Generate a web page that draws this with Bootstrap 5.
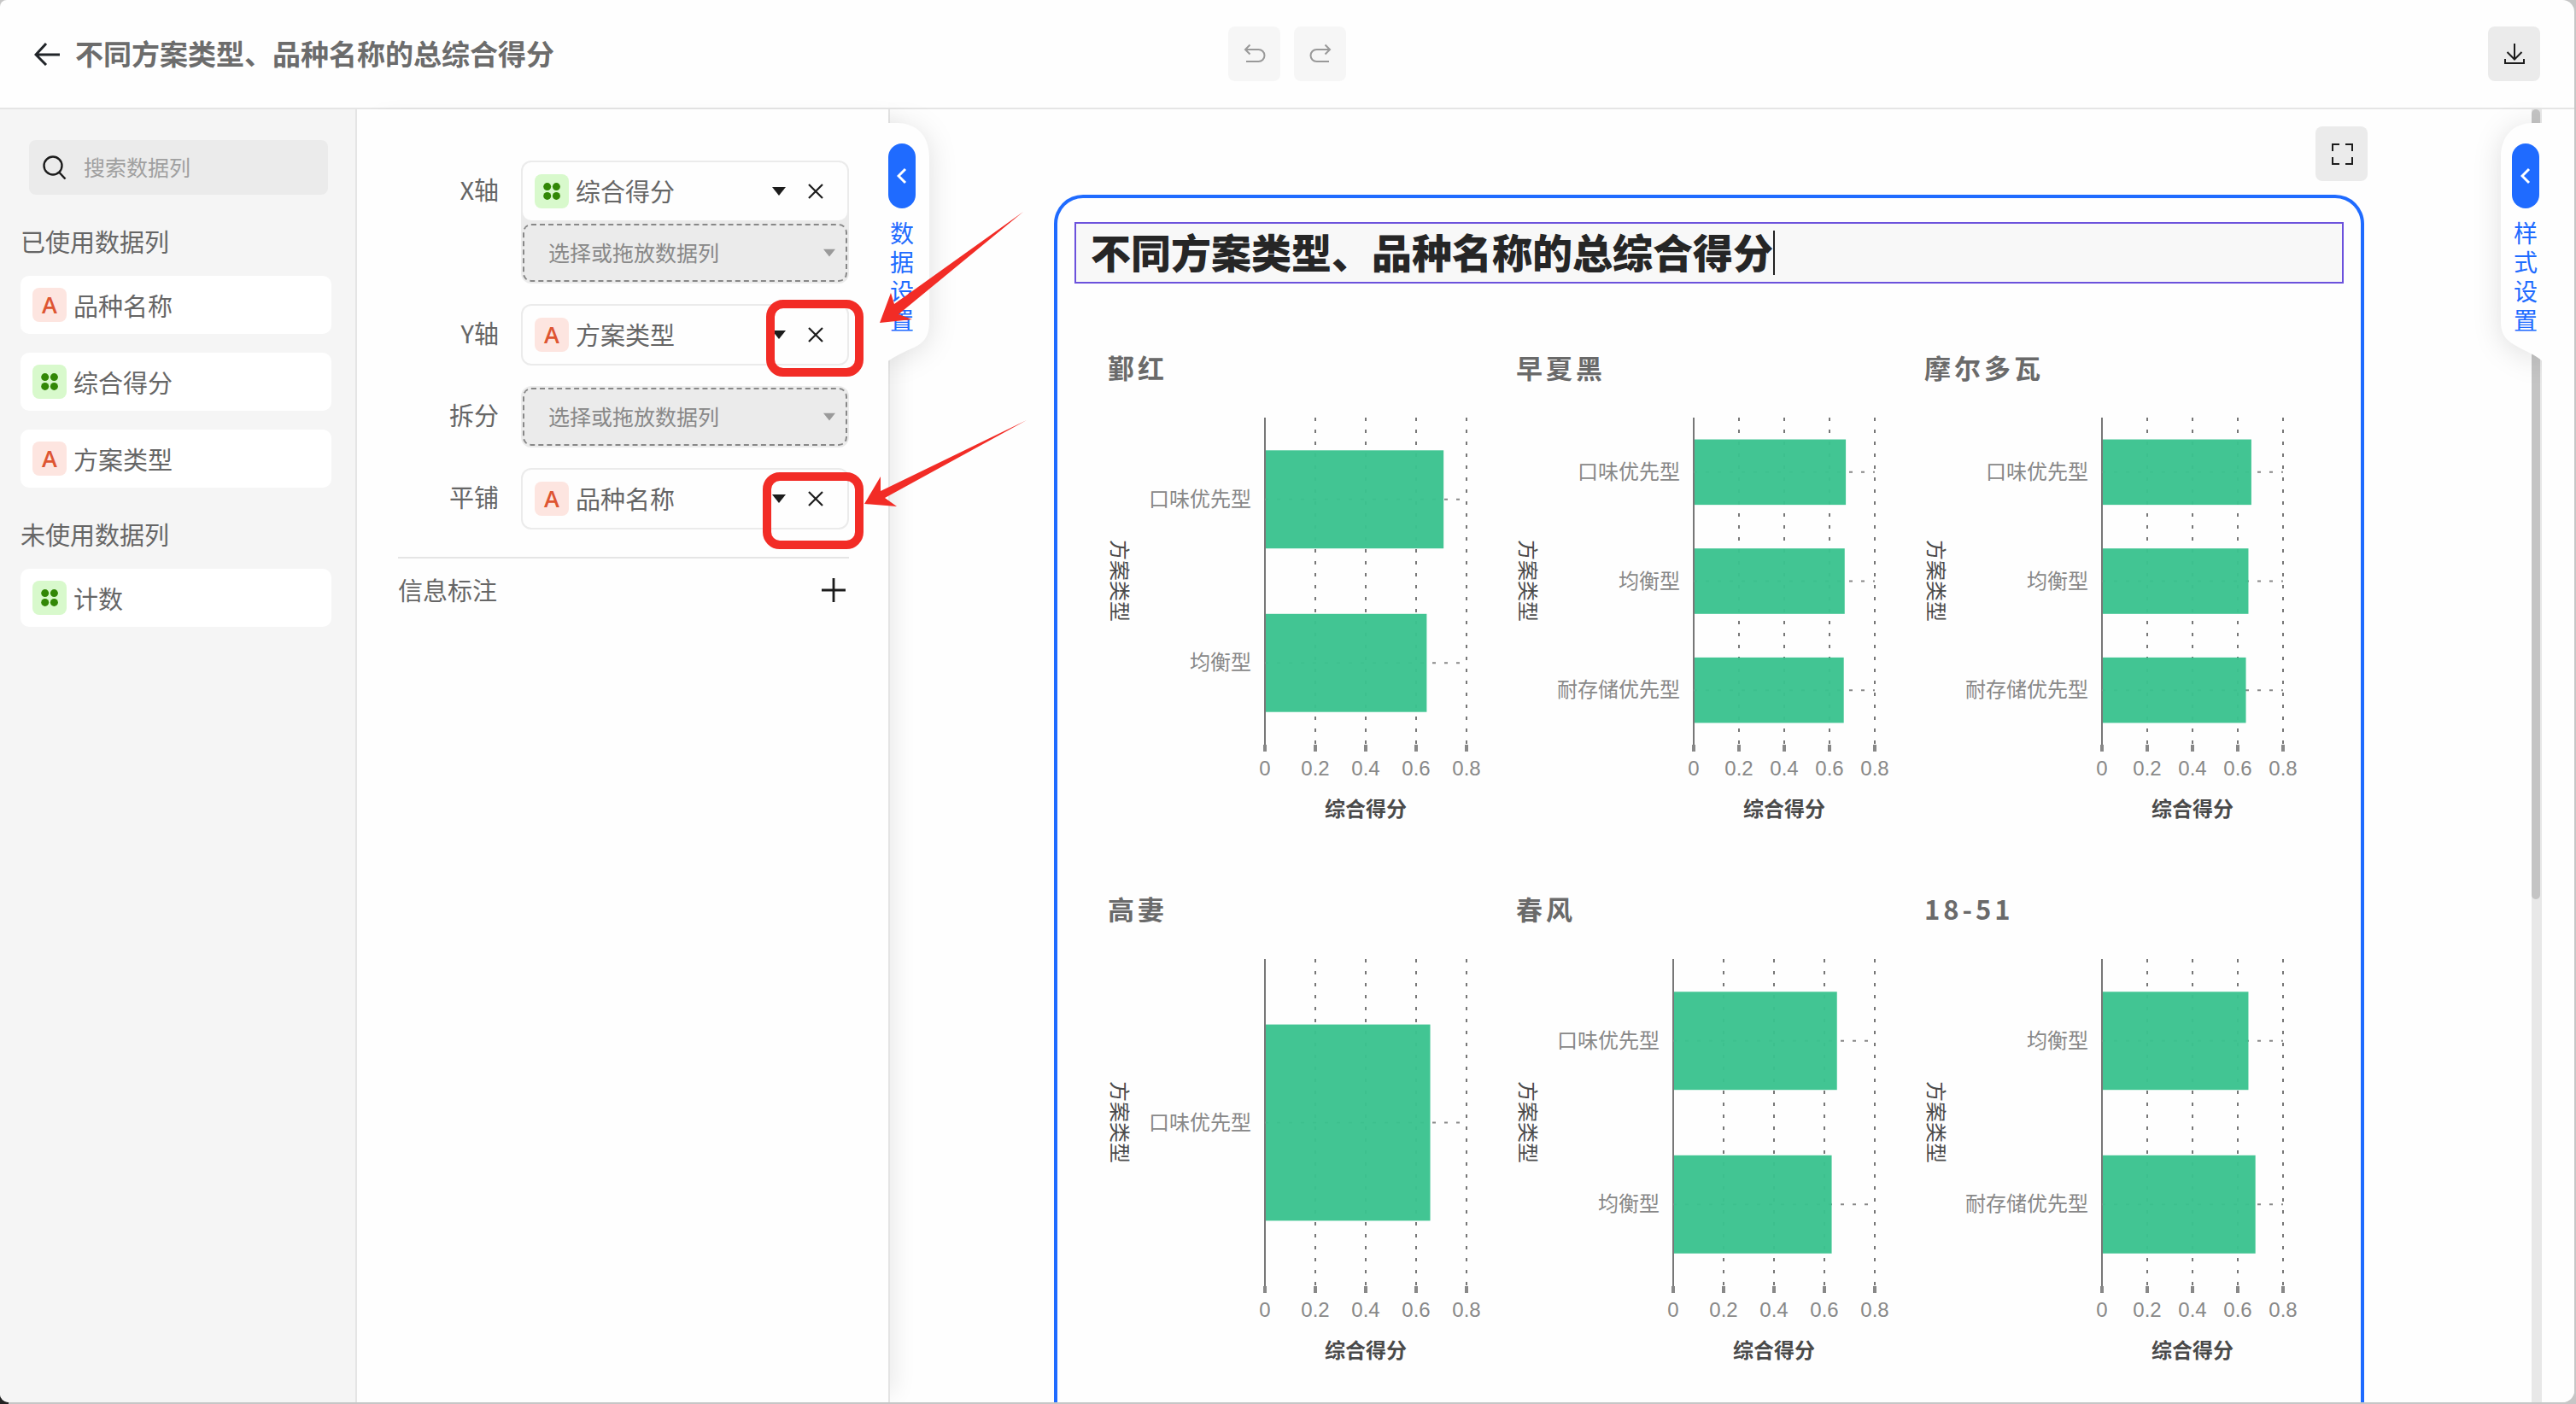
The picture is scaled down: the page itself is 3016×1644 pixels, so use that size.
<!DOCTYPE html>
<html lang="zh-CN">
<head>
<meta charset="utf-8">
<meta name="viewport" content="width=device-width, initial-scale=1">
<title>不同方案类型、品种名称的总综合得分</title>
<link href="https://cdn.jsdelivr.net/npm/bootstrap@5.3.0/dist/css/bootstrap.min.css" rel="stylesheet">
<style>
:root{--ink:#1c1c1c;--txt:#666;--line:#e5e5e5;--soft:#ebebeb;--brand:#1f6bff}
html,body{height:100%}
body{margin:0;overflow:hidden;font-family:"Noto Sans CJK SC","Liberation Sans",sans-serif;font-size:29px;line-height:40px;color:var(--txt);background:linear-gradient(#222,#222) 0 100%/10px 10px no-repeat,#c6c6c6}
.app-window{height:calc(100vh - 2px);margin-right:2px;background:#fefefe;border-radius:8px 14px 14px 10px;overflow:hidden;position:relative}
.app-bar{display:grid;grid-template-columns:1fr auto 1fr;align-items:center;height:128px;padding:0 40px;border-bottom:2px solid var(--line);flex:none}
.app-title{font-size:33px;line-height:40px;font-weight:600;color:#6c6c6c;margin:0;padding-bottom:2px}
.tool-btn{width:61px;height:64px;border:0;border-radius:8px;background:var(--soft);padding:0;display:flex;align-items:center;justify-content:center;color:var(--ink)}
.tool-btn:disabled{background:#f6f6f6;color:#999}
svg{display:block;flex:none}
.ico{fill:none;stroke:currentColor;stroke-width:2}
/* data columns */
.side-list{width:418px;flex:none;background:#f5f5f5;border-right:2px solid var(--line);padding:36px 28px 0 24px}
.search-box{height:64px;margin:0 4px 0 10px;padding-left:16px;gap:20px;background:var(--soft);border-radius:8px;color:var(--ink)}
.search-box input{border:0;background:none;outline:0;padding:0 0 3px;min-width:0;flex:1;font-size:25px;color:var(--txt)}
.search-box input::placeholder{color:#a0a0a0;opacity:1}
.side-head{font-size:29px;line-height:40px;font-weight:400;margin:34px 0 21px}
.column-list{gap:22px}
.column-list .list-group-item{height:68px;border:0;border-radius:10px;background:#fff;padding:0 14px;gap:8px;color:var(--txt)}
.kind{width:40px;height:40px;border-radius:8px;flex:none;display:flex;align-items:center;justify-content:center;font:600 27px/40px "Open Sans","Noto Sans",sans-serif}
.kind-text{background:#fde5e0;color:#de5532}
.kind-num{background:#d8f9cc;color:#328706}
/* axis settings */
.axis-panel{width:624px;flex:none;border-right:2px solid #e4e4e4;background:#fefefe;padding:60px 46px 0 48px;position:relative;z-index:2;box-shadow:16px 0 24px -10px rgba(0,0,0,.08)}
.axis-form{display:grid;grid-template-columns:118px 1fr;column-gap:26px;row-gap:24px}
.axis-form>label{line-height:67px;height:72px;text-align:right}
.slot-box{background:var(--soft);border-radius:12px;padding:2px;display:grid;gap:4px}
.slot-item{height:68px;border-radius:10px;background:#fefefe;padding:0 24px 0 14px;display:flex;align-items:center;gap:8px;color:var(--ink)}
.slot-item select,.slot-drop select{appearance:none;border:0;outline:0;background:none;padding:0 0 2px;min-width:0;flex:1;height:46px;font-size:29px;color:var(--txt)}
.slot-item button,.note-head button{border:0;background:none;padding:4px;color:var(--ink)}
.slot-item button{margin-left:14px}
.slot-drop{height:68px;border:2px dashed #888;border-radius:10px;padding:0 12px 0 28px;display:flex;align-items:center;color:#9a9a9a}
.slot-drop select{font-size:25px;color:#888}
.note-head{border-top:2px solid var(--line);margin-top:32px;padding-top:16px}
.note-head span{padding-bottom:2px}
/* folding tabs */
.fold-tab{position:absolute;top:16px;width:48px;height:280px;border:0;background:none;padding:24px 0 0;z-index:3;color:var(--brand);display:flex;flex-direction:column;align-items:center;gap:11px}
.fold-tab .tab-shape{position:absolute;left:0;top:0;overflow:visible;filter:drop-shadow(0 4px 16px rgba(0,0,0,.12))}
.fold-tab .pill{position:relative;width:32px;height:76px;border-radius:16px;background:var(--brand);color:#fff;display:flex;align-items:center;justify-content:center}
.fold-tab .tab-name{position:relative;width:29px;font-size:28px;line-height:34px;word-break:break-all}
.tab-left{right:-48px;padding-right:16px}
.tab-right{left:-48px;padding-left:10px}
/* canvas */
.stage{flex:1;min-width:0;padding:20px 192px 0;overflow:hidden}
.chart-card{border:4px solid var(--brand);border-bottom:0;border-radius:34px 34px 0 0;margin:16px 4px 0 0;padding:28px 20px 0;height:1500px}
.title-edit{height:72px;border:2px solid #6c52dc;background:#f8f8f8;padding-left:17px}
.title-edit input{font-size:47px;line-height:60px;font-weight:900;color:#262626;width:17em;height:66px;border:0;padding:0 0 5px;background:none;outline:0}
.text-caret{width:2px;height:52px;background:#222}
.facets{padding:78px 13px 0 39px}
.facet-name{font-size:31px;line-height:40px;font-weight:600;color:#6a6a6a;margin:0;padding-bottom:2px;box-sizing:content-box;letter-spacing:4px}
.facet svg{width:100%;height:auto;overflow:visible}
.facet + .facet svg{overflow:visible}
.facet text{font-size:24px;fill:#888}
.facet .num{font-family:"Liberation Sans",sans-serif}
.facet .axis-name{fill:#4a4a4a}
.scroll-track{width:12px;flex:none;background:#e8e8e8}
.scroll-thumb{width:10px;height:925px;border-radius:5px;background:#c4c4c4}
.style-panel{width:38px;flex:none;position:relative;background:#fefefe}
.marks{position:absolute;left:0;top:0;z-index:5;pointer-events:none}
</style>
<script src="https://cdn.jsdelivr.net/npm/bootstrap@5.3.0/dist/js/bootstrap.bundle.min.js"></script>
</head>
<body>
<svg width="0" height="0" class="position-absolute">
  <symbol id="dots" viewBox="0 0 20 20"><g fill="currentColor"><circle cx="4.7" cy="4.6" r="4.5"/><circle cx="15.4" cy="4.6" r="4.5"/><circle cx="4.7" cy="15.4" r="4.5"/><circle cx="15.4" cy="15.4" r="4.5"/></g></symbol>
  <symbol id="cross" viewBox="0 0 18 18"><path d="M1 1l16 16M17 1L1 17" fill="none" stroke="currentColor" stroke-width="2.2"/></symbol>
  <symbol id="down" viewBox="0 0 16 10"><path d="M0 0h16L8 10z" fill="currentColor"/></symbol>
  <symbol id="back" viewBox="0 0 12 20"><path d="M10 2L2 10l8 8" fill="none" stroke="currentColor" stroke-width="3"/></symbol>
</svg>
<div class="app-window d-flex flex-column">
  <header class="app-bar">
    <div class="d-flex align-items-center">
      <a href="#" class="me-3 link-dark" aria-label="返回"><svg width="32" height="28" viewBox="0 0 32 28" class="ico" style="stroke-width:3"><path d="M14 2L2 15l12 12M2 15h28"/></svg></a>
      <h1 class="app-title">不同方案类型、品种名称的总综合得分</h1>
    </div>
    <div class="d-flex gap-3">
      <button class="tool-btn" disabled aria-label="撤销"><svg width="26" height="24" viewBox="0 0 26 24" class="ico"><path d="M7.500 1.500L2 7l5.500 5.500M2 7h15.500a7 7 0 0 1 0 14H3"/></svg></button>
      <button class="tool-btn" disabled aria-label="重做"><svg width="26" height="24" viewBox="0 0 26 24" class="ico"><path d="M18.500 1.500L24 7l-5.500 5.500M24 7H8.500a7 7 0 0 0 0 14H23"/></svg></button>
    </div>
    <div class="d-flex justify-content-end">
      <button class="tool-btn" aria-label="下载"><svg width="26" height="26" viewBox="0 0 26 26" class="ico"><path d="M13 1v19M4.500 11l8.500 8.500L21.500 11M2 19v5h22v-5"/></svg></button>
    </div>
  </header>

  <main class="d-flex flex-grow-1" style="min-height:0">
    <aside class="side-list">
      <label class="search-box d-flex align-items-center">
        <svg width="28" height="28" viewBox="0 0 28 28" class="ico" style="stroke-width:2.400"><circle cx="12" cy="12" r="10.500"/><path d="M19 19.500l7.500 8"/></svg>
        <input type="text" placeholder="搜索数据列" aria-label="搜索数据列">
      </label>
      <h2 class="side-head">已使用数据列</h2>
      <ul class="list-group column-list">
        <li class="list-group-item d-flex align-items-center"><span class="kind kind-text">A</span>品种名称</li>
        <li class="list-group-item d-flex align-items-center"><span class="kind kind-num"><svg width="20" height="20"><use href="#dots"/></svg></span>综合得分</li>
        <li class="list-group-item d-flex align-items-center"><span class="kind kind-text">A</span>方案类型</li>
      </ul>
      <h2 class="side-head">未使用数据列</h2>
      <ul class="list-group column-list">
        <li class="list-group-item d-flex align-items-center"><span class="kind kind-num"><svg width="20" height="20"><use href="#dots"/></svg></span>计数</li>
      </ul>
    </aside>

    <section class="axis-panel">
      <form class="axis-form">
        <label for="axis-x">X轴</label>
        <div class="slot-box">
          <div class="slot-item"><span class="kind kind-num"><svg width="20" height="20"><use href="#dots"/></svg></span><select id="axis-x"><option>综合得分</option></select><svg width="16" height="10"><use href="#down"/></svg><button type="button" aria-label="移除综合得分"><svg width="18" height="18"><use href="#cross"/></svg></button></div>
          <div class="slot-drop"><select aria-label="X轴数据列"><option>选择或拖放数据列</option></select><svg width="14" height="10"><use href="#down"/></svg></div>
        </div>
        <label for="axis-y">Y轴</label>
        <div class="slot-box">
          <div class="slot-item"><span class="kind kind-text">A</span><select id="axis-y"><option>方案类型</option></select><svg width="16" height="10"><use href="#down"/></svg><button type="button" aria-label="移除方案类型"><svg width="18" height="18"><use href="#cross"/></svg></button></div>
        </div>
        <label for="axis-split">拆分</label>
        <div class="slot-box">
          <div class="slot-drop"><select id="axis-split"><option>选择或拖放数据列</option></select><svg width="14" height="10"><use href="#down"/></svg></div>
        </div>
        <label for="axis-tile">平铺</label>
        <div class="slot-box">
          <div class="slot-item"><span class="kind kind-text">A</span><select id="axis-tile"><option>品种名称</option></select><svg width="16" height="10"><use href="#down"/></svg><button type="button" aria-label="移除品种名称"><svg width="18" height="18"><use href="#cross"/></svg></button></div>
        </div>
      </form>
      <div class="note-head d-flex justify-content-between align-items-center">
        <span>信息标注</span>
        <button type="button" aria-label="添加信息标注"><svg width="28" height="28" viewBox="0 0 28 28" class="ico" style="stroke-width:2.800"><path d="M14 0v28M0 14h28"/></svg></button>
      </div>
      <button type="button" class="fold-tab tab-left">
        <svg class="tab-shape" width="48" height="280" viewBox="0 0 48 280" style="clip-path:inset(-40px -60px -40px 0)"><path d="M-2 0H10C34 0 48 16 48 40V232C48 250 42 257 30 263C18 268 8 273 -2 280Z" fill="#fefefe"/></svg>
        <span class="pill"><svg width="12" height="20"><use href="#back"/></svg></span>
        <span class="tab-name">数据设置</span>
      </button>
    </section>

    <section class="stage">
      <div class="d-flex justify-content-end"><button class="tool-btn" aria-label="全屏"><svg width="26" height="26" viewBox="0 0 26 26" class="ico"><path d="M2 10V2h8M17 2h8v8M25 17v8h-8M10 25H2v-8"/></svg></button></div>
      <article class="chart-card">
        <div class="title-edit d-flex align-items-center">
          <input type="text" value="不同方案类型、品种名称的总综合得分" aria-label="图表标题"><span class="text-caret"></span>
        </div>
        <div class="facets row g-0" id="facets"></div>
      </article>
    </section>
    <div class="scroll-track"><div class="scroll-thumb"></div></div>

    <aside class="style-panel">
      <button type="button" class="fold-tab tab-right">
        <svg class="tab-shape" width="48" height="280" viewBox="0 0 48 280" style="clip-path:inset(-40px 0 -40px -60px)"><path d="M50 0H38C14 0 0 16 0 40V232C0 250 8 255 18 261C28 267 40 271 50 280Z" fill="#fefefe"/></svg>
        <span class="pill"><svg width="12" height="20"><use href="#back"/></svg></span>
        <span class="tab-name">样式设置</span>
      </button>
    </aside>
  </main>

  <svg class="marks" width="1220" height="660" viewBox="0 0 1220 660">
    <g fill="none" stroke="#f22c26" stroke-width="10"><rect x="902" y="356" width="104" height="80" rx="15"/><rect x="898" y="558" width="108" height="80" rx="15"/></g>
    <g fill="#f22c26"><path d="M1030 378L1043 343L1047 356L1198 248L1052 368L1068 374Z"/><path d="M1012 590L1031 558L1031 575L1202 492L1036 583L1050 593Z"/></g>
  </svg>
</div>
<script>
const K='口味优先型',J='均衡型',N='耐存储优先型';
const charts=[
  {name:'鄞红',x0:184,rows:[[K,.709],[J,.642]]},
  {name:'早夏黑',x0:208,rows:[[K,.672],[J,.667],[N,.663]]},
  {name:'摩尔多瓦',x0:208,rows:[[K,.66],[J,.647],[N,.636]]},
  {name:'高妻',x0:184,rows:[[K,.656]]},
  {name:'春风',x0:184,rows:[[K,.65],[J,.629]]},
  {name:'18-51',x0:208,rows:[[J,.647],[N,.678]]}
];
const top0=37,bottom=420,right=420;
document.getElementById('facets').innerHTML=charts.map(c=>{
  const w=right-c.x0,band=(bottom-top0)/c.rows.length;let s='';
  for(let i=0;i<5;i++){
    const x=c.x0+w*i/4;
    s+=`<path d="M${x} ${top0}V${bottom}" stroke="#777" stroke-width="2" ${i?'stroke-dasharray="4 10"':''}/>`+
       `<path d="M${x} ${bottom}v8" stroke="#888" stroke-width="4"/>`+
       `<text class="num" x="${x}" y="456" text-anchor="middle">${i?(i*.2).toFixed(1):0}</text>`;
  }
  c.rows.forEach(([label,v],i)=>{
    const cy=top0+band*(i+.5);
    s+=`<path d="M${c.x0} ${cy}H${right}" stroke="#888" stroke-width="2" stroke-dasharray="4 10"/>`+
       `<rect x="${c.x0+1}" y="${cy-band*.3}" width="${w*v/.8-1}" height="${band*.6}" fill="#3ac38f" opacity=".96"/>`+
       `<text x="${c.x0-16}" y="${cy+8}" text-anchor="end">${label}</text>`;
  });
  s+=`<text class="axis-name" font-weight="600" x="${(c.x0+right)/2}" y="504" text-anchor="middle">综合得分</text>`+
     `<text class="axis-name" transform="translate(5 228) rotate(90)" text-anchor="middle">方案类型</text>`;
  return `<figure class="facet col-4 m-0"><h3 class="facet-name">${c.name}</h3><svg viewBox="0 0 478 592">${s}</svg></figure>`;
}).join('');
</script>
</body>
</html>
